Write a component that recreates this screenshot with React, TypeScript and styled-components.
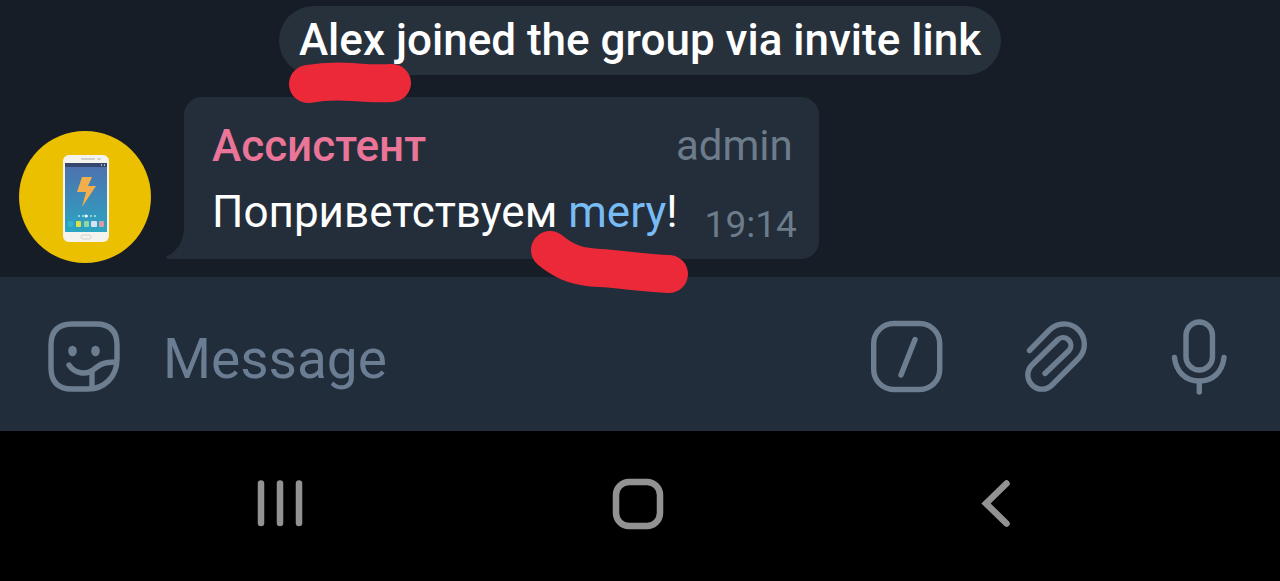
import React from 'react';
import styled, { createGlobalStyle } from 'styled-components';

const GlobalStyle = createGlobalStyle`
  *, *::before, *::after { box-sizing: border-box; }
  body { margin: 0; background: #000; font-family: Roboto, "Noto Sans", sans-serif; }
`;

const Screen = styled.div`
  display: flex;
  flex-direction: column;
  min-height: 100vh;
`;

const Chat = styled.main`
  display: flex;
  flex-direction: column;
  gap: 22px;
  padding: 6px 19px 14px;
  background: #161d26;
`;

const ServiceNotice = styled.p`
  position: relative;
  align-self: center;
  margin: 0;
  padding: 0 20px;
  border-radius: 35px;
  background: #27313c;
  color: #fff;
  font-size: 44px;
  font-weight: 500;
  line-height: 69px;
`;

const MessageRow = styled.article`
  display: flex;
  align-items: flex-end;
  gap: 33px;
`;

const Avatar = styled.svg`
  flex: none;
  width: 132px;
  height: 132px;
`;

const Bubble = styled.div`
  position: relative;
  margin-bottom: 4px;
  padding: 16px 22px 14px 28px;
  border-radius: 18px 18px 18px 0;
  background: #232e3a;
`;

const Tail = styled.svg`
  position: absolute;
  left: -18px;
  bottom: 0;
  width: 18px;
  height: 30px;
`;

const BubbleHeader = styled.header`
  display: flex;
  justify-content: space-between;
  padding-right: 4px;
  line-height: 66px;
`;

const Sender = styled.span`
  color: #ea7599;
  font-size: 44px;
  font-weight: 500;
`;

const Role = styled.span`
  color: #6d7c8b;
  font-size: 42px;
`;

const BubbleBody = styled.div`
  display: flex;
  align-items: flex-end;
  gap: 27px;
`;

const Text = styled.p`
  margin: 0;
  color: #fff;
  font-size: 44px;
  line-height: 66px;
`;

const Mention = styled.a`
  color: #78bcf6;
  text-decoration: none;
`;

const Time = styled.time`
  margin-bottom: -4px;
  color: #6d7c8b;
  font-size: 37px;
  line-height: 48px;
`;

const Scribble = styled.svg<{ $left: number; $top: number }>`
  position: absolute;
  z-index: 2;
  left: ${(p) => p.$left}px;
  top: ${(p) => p.$top}px;
  fill: none;
  stroke: #eb2939;
  stroke-width: 38px;
  stroke-linecap: round;
  stroke-linejoin: round;
  pointer-events: none;
`;

const Composer = styled.form`
  display: flex;
  align-items: center;
  gap: 43px;
  height: 154px;
  padding: 5px 45px 0 48px;
  background: #222d3b;
`;

const MessageInput = styled.input`
  flex: 1;
  min-width: 0;
  height: 70px;
  padding: 4px 0 0;
  border: 0;
  outline: 0;
  background: transparent;
  color: #fff;
  font: 400 55px/66px Roboto, "Noto Sans", sans-serif;

  &::placeholder { color: #6b7d92; opacity: 1; }
`;

const Actions = styled.div`
  display: flex;
  gap: 74px;
`;

const IconButton = styled.button`
  flex: none;
  display: flex;
  padding: 0;
  border: 0;
  background: none;
  cursor: pointer;
`;

const LineIcon = styled.svg`
  width: 72px;
  height: 76px;
  fill: none;
  stroke: #6e7e91;
  stroke-width: 5.4px;
  stroke-linecap: round;
  stroke-linejoin: round;
`;

const SystemNav = styled.nav`
  display: flex;
  flex: 1;
  justify-content: center;
  align-items: center;
  min-height: 150px;
  padding: 0 4px 5px 0;
  background: #000;
`;

const NavButton = styled(IconButton)`
  width: 28%;
  justify-content: center;
`;

const NavIcon = styled.svg`
  width: 52px;
  height: 52px;
  fill: none;
  stroke: #929292;
  stroke-width: 6.5px;
  stroke-linecap: round;
`;

function PhoneAvatar() {
  return (
    <Avatar viewBox="0 0 132 132" role="img" aria-label="Ассистент">
      <defs>
        <linearGradient id="screen" x1="0" y1="0" x2="0" y2="1">
          <stop offset="0" stopColor="#4f6fae" />
          <stop offset="1" stopColor="#2ba5c2" />
        </linearGradient>
      </defs>
      <circle cx="66" cy="66" r="66" fill="#ebc000" />
      <rect x="44" y="24" width="46" height="87" rx="6" fill="#f4f3ee" />
      <path d="M63 28h12M79 28h2" stroke="#d0d0cc" strokeWidth="2" strokeLinecap="round" />
      <rect x="46" y="32" width="42" height="69" fill="url(#screen)" />
      <rect x="46" y="32" width="42" height="4" fill="#35466f" />
      <path d="M82 34h1M85 34h1" stroke="#d7dce8" strokeWidth="1.5" />
      <path d="M63 46h10l-4 9h8L63 76l4-15h-9z" fill="#f2ae4c" />
      <path d="M59 85h18" stroke="#8fd3e2" strokeWidth="2" strokeDasharray="2 2" />
      <circle cx="67" cy="85" r="1.5" fill="#fff" />
      <rect x="49" y="90" width="5" height="6" rx="1" fill="#35b3cf" />
      <rect x="57" y="90" width="5" height="6" rx="1" fill="#d8e04a" />
      <rect x="65" y="90" width="5" height="6" rx="1" fill="#8ed7a5" />
      <rect x="72" y="90" width="6" height="6" rx="1" fill="#d3e3f5" />
      <rect x="80" y="90" width="5" height="6" rx="1" fill="#d99aa5" />
      <rect x="62" y="104" width="10" height="4" rx="2" fill="none" stroke="#d2d2ce" />
    </Avatar>
  );
}

export default function App() {
  return (
    <Screen>
      <GlobalStyle />
      <Chat>
        <ServiceNotice>
          Alex joined the group via invite link
          <Scribble $left={10} $top={56} width="122" height="44" viewBox="0 0 122 44" aria-hidden="true">
            <path d="M19 22C36 19 50 19 63 20S88 22 103 21" />
          </Scribble>
        </ServiceNotice>
        <MessageRow>
          <PhoneAvatar />
          <Bubble>
            <Tail viewBox="0 0 18 30" aria-hidden="true">
              <path d="M18 0C17 12 12 22 1 27Q-1 30 3 30H18z" fill="#232e3a" />
            </Tail>
            <BubbleHeader>
              <Sender>Ассистент</Sender>
              <Role>admin</Role>
            </BubbleHeader>
            <BubbleBody>
              <Text>
                Поприветствуем <Mention href="#mery">mery</Mention>!
              </Text>
              <Time>19:14</Time>
            </BubbleBody>
            <Scribble $left={347} $top={134} width="158" height="64" viewBox="0 0 158 64" aria-hidden="true">
              <path d="M19 19C36 33 49 36 69 37S112 42 138 43" />
            </Scribble>
          </Bubble>
        </MessageRow>
      </Chat>
      <Composer onSubmit={(e: React.FormEvent) => e.preventDefault()}>
        <IconButton type="button" aria-label="Stickers">
          <LineIcon viewBox="0 0 72 76">
            <path d="M24 5H48Q69 5 69 26V40C69 58 56 70 40 70H24Q3 70 3 49V26Q3 5 24 5z" />
            <path d="M21 46C27 55 38 56 45 51C51 46 55 43 68 43" />
            <path d="M44 53V69" />
            <ellipse cx="24.5" cy="32" rx="4.3" ry="5.3" fill="#6e7e91" stroke="none" />
            <ellipse cx="47.5" cy="32" rx="4.3" ry="5.3" fill="#6e7e91" stroke="none" />
          </LineIcon>
        </IconButton>
        <MessageInput type="text" placeholder="Message" aria-label="Message" />
        <Actions>
          <IconButton type="button" aria-label="Commands">
            <LineIcon viewBox="0 0 72 76">
              <rect x="2.7" y="4.5" width="66" height="66" rx="20" />
              <path d="M44 20.5L30 56" />
            </LineIcon>
          </IconButton>
          <IconButton type="button" aria-label="Attach">
            <LineIcon viewBox="0 0 72 76">
              <path d="M12.5 31.5L32.5 11A20.2 20.2 0 0 1 61.5 39.5L35 66A14 14 0 0 1 15 46L41 20.5A7.8 7.8 0 0 1 52 31.5L28 54.5" />
            </LineIcon>
          </IconButton>
          <IconButton type="button" aria-label="Record voice">
            <LineIcon viewBox="0 0 72 76">
              <rect x="23" y="3" width="26.5" height="48" rx="13.25" />
              <path d="M11.5 38.5C13 53 23 62 36.3 62S59.5 53 61 38.5M36.3 62V73" />
            </LineIcon>
          </IconButton>
        </Actions>
      </Composer>
      <SystemNav aria-label="System">
        <NavButton type="button" aria-label="Recent apps">
          <NavIcon viewBox="0 0 52 52">
            <path d="M6 5.5V45M25 5.5V45M44 5.5V45" />
          </NavIcon>
        </NavButton>
        <NavButton type="button" aria-label="Home">
          <NavIcon viewBox="0 0 52 52">
            <rect x="4" y="4" width="44" height="44" rx="13" />
          </NavIcon>
        </NavButton>
        <NavButton type="button" aria-label="Back">
          <NavIcon viewBox="0 0 52 52">
            <path d="M37.5 5.5L17 25.5L37.5 45.5" />
          </NavIcon>
        </NavButton>
      </SystemNav>
    </Screen>
  );
}
